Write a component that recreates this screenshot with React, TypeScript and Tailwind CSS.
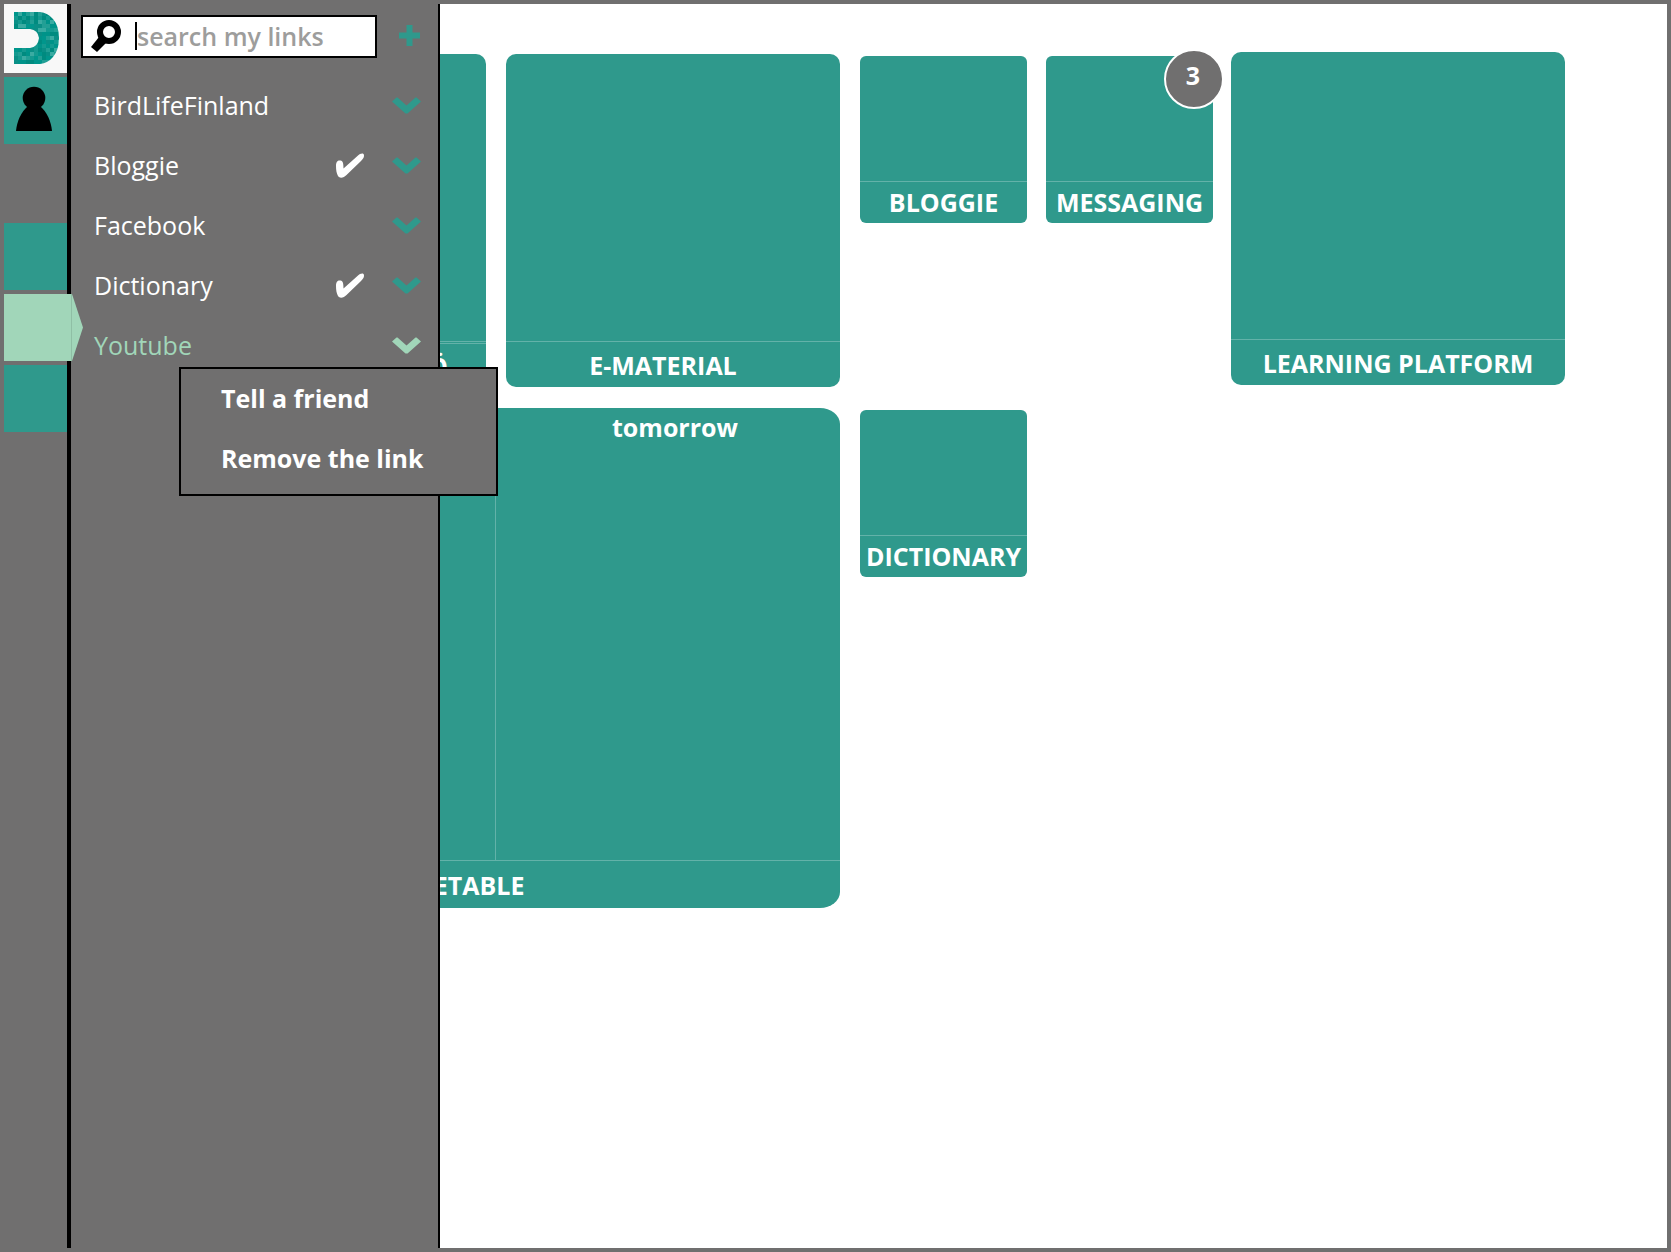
import React from 'react';

const links = [
  { name: 'BirdLifeFinland', pinned: false },
  { name: 'Bloggie', pinned: true },
  { name: 'Facebook', pinned: false },
  { name: 'Dictionary', pinned: true },
  { name: 'Youtube', pinned: false },
];

const SELECTED = 'Youtube';

const mosaic = ['#00968c', '#0a8f86', '#229f95', '#009389', '#149a90', '#008b80', '#3aaba2'];

const Logo = () => {
  const cells = [];
  for (let y = 0; y < 13; y++) {
    for (let x = 0; x < 12; x++) {
      const color = mosaic[(x * 5 + y * 3 + x * y * 2 + ((x * x + y) % 4)) % mosaic.length];
      cells.push(<rect key={`${x}-${y}`} x={x * 4} y={y * 4} width="4" height="4" fill={color} />);
    }
  }
  return (
    <svg width="46" height="52" viewBox="0 0 46 52" aria-hidden="true">
      <clipPath id="logo-shape">
        <path d="M0 0H26Q34 1 39 7Q45 14 45 26Q45 38 39 45Q34 51 26 52H0V36H16Q24 35 25 26Q24 18 16 17H0Z" />
      </clipPath>
      <g clipPath="url(#logo-shape)" shapeRendering="crispEdges">{cells}</g>
    </svg>
  );
};

const Person = () => (
  <svg width="36" height="46" viewBox="0 0 36 46" aria-hidden="true">
    <circle cx="18" cy="12" r="11.3" />
    <path d="M12 20H24C31 26 35 35 36 45H0C1 35 5 26 12 20Z" />
  </svg>
);

const Magnifier = () => (
  <svg width="30" height="32" viewBox="0 0 30 32" className="shrink-0" aria-hidden="true">
    <circle cx="18" cy="12" r="9" fill="none" stroke="#000" strokeWidth="6" />
    <path d="M8 17L15 23L6 32L0 27Z" />
  </svg>
);

const Check = () => (
  <svg width="28" height="25" viewBox="0 0 28 25" fill="#fff" aria-label="On desktop" role="img">
    <path d="M0 13C0 9 1.500 7.500 3.500 7.500C6.500 7.500 7.500 9 7.500 15.500L22 2.500C24 0.500 28 -0.500 28 2.500C28 4.500 27.500 5.500 25 8L10.500 22C8 24.500 4 26 2 23C0.500 20 0 17 0 13Z" />
  </svg>
);

const Chevron = () => (
  <svg width="29" height="17" viewBox="0 0 29 17" fill="currentColor" aria-hidden="true">
    <path d="M0 4.500L4.500 0.500H5.500L14.500 8.500L23.500 0.500H24.500L29 4.500L15.500 16.500H13.500Z" />
  </svg>
);

const SmallTile = ({ title, badge }: { title: string; badge?: number }) => (
  <a href="#" className="relative flex h-[167px] w-[167px] shrink-0 flex-col rounded-md bg-[#2f998c]">
    <span className="flex-1" />
    <span className="flex h-[42px] items-center justify-center border-t border-white/25 pb-px">{title}</span>
    {badge && (
      <span className="absolute -top-[7px] -right-[11px] flex h-[60px] w-[60px] justify-center rounded-full border-2 border-white bg-[#706f6f] pt-[7px] pr-[2px]">
        {badge}
      </span>
    )}
  </a>
);

const App = () => {
  return (
    <div className="flex min-h-screen border-4 border-[#706f6f] bg-white font-['Open_Sans',sans-serif] text-[25px] leading-[34px] text-white">
      {/* Icon rail */}
      <nav className="relative z-20 flex w-[67px] shrink-0 flex-col gap-1 border-r-4 border-black bg-[#706f6f]">
        <a href="#" aria-label="Home" className="flex h-[69px] bg-[#f8f8f8] pt-2 pl-[10px]">
          <Logo />
        </a>
        <a href="#" aria-label="Profile" className="mb-[75px] flex h-[67px] bg-[#2f998c] pt-[9px] pl-3 text-black">
          <Person />
        </a>
        <a href="#" aria-label="Desktop" className="h-[67px] bg-[#2f998c]" />
        <a href="#" aria-label="My links" className="h-[67px]">
          <svg width="79" height="67" viewBox="0 0 79 67" fill="#a1d6b9" className="max-w-none" aria-hidden="true">
            <path d="M0 0H68L79 33.500L68 67H0Z" />
            <path d="M67.500 0V67" stroke="#8fbfa5" />
          </svg>
        </a>
        <a href="#" aria-label="Settings" className="h-[67px] bg-[#2f998c]" />
      </nav>

      <div className="relative flex-1 overflow-hidden">
        {/* Links drawer */}
        <aside className="absolute inset-y-0 left-0 z-10 w-[369px] border-r-2 border-black bg-[#706f6f] pt-[11px]">
          <div className="flex items-center justify-between pr-[18px] pl-[10px]">
            <label className="flex h-[43px] w-[296px] items-center border-2 border-black bg-white pb-[2px] pl-2">
              <Magnifier />
              <span className="ml-[14px] h-[28px] w-[2px] bg-black" />
              <input
                type="text"
                aria-label="Search my links"
                placeholder="search my links"
                className="h-[34px] w-[220px] font-semibold text-black outline-none placeholder:text-[#9d9d9c]"
              />
            </label>
            <button aria-label="Add link" className="pb-[2px] text-[#2f998c]">
              <svg width="21" height="21" viewBox="0 0 21 21" fill="currentColor" aria-hidden="true">
                <path d="M7.500 0H13.500V7.500H21V13.500H13.500V21H7.500V13.500H0V7.500H7.500Z" />
              </svg>
            </button>
          </div>
          <ul className="mt-[17px]">
            {links.map((link) => (
              <li
                key={link.name}
                className={`flex h-[60px] items-center gap-7 pr-[17px] pl-[23px] ${link.name === SELECTED ? 'text-[#a1d6b9]' : ''}`}
              >
                <a href="#" className="flex-1">{link.name}</a>
                {link.pinned && <Check />}
                <button aria-label={`Options for ${link.name}`} className={link.name === SELECTED ? '' : 'text-[#2f998c]'}>
                  <Chevron />
                </button>
              </li>
            ))}
          </ul>
        </aside>

        {/* Link options menu */}
        <div className="absolute top-[363px] left-[108px] z-30 flex h-[129px] w-[319px] flex-col border-2 border-black bg-[#706f6f] pl-10 font-bold">
          <button className="h-[60px] pb-[2px] text-left">Tell a friend</button>
          <button className="h-[60px] pb-[2px] text-left">Remove the link</button>
        </div>

        {/* Desktop tiles */}
        <main className="flex items-start pt-12 pl-[81px] font-bold">
          <div className="mr-5 flex shrink-0 flex-col gap-[21px] pt-[2px]">
            <div className="flex gap-5">
              <a href="#" className="flex h-[333px] w-[334px] flex-col rounded-[10px] bg-[#2f998c]">
                <span className="flex-1 border-b border-white/25" />
                <span className="mt-px flex h-[44px] items-center justify-end border-t border-white/25 pr-[38px]">Ö</span>
              </a>
              <a href="#" className="flex h-[333px] w-[334px] flex-col rounded-[10px] bg-[#2f998c]">
                <span className="flex-1" />
                <span className="flex h-[46px] items-center justify-center border-t border-white/25 pr-5">E-MATERIAL</span>
              </a>
            </div>
            <a href="#" className="flex h-[500px] flex-col rounded-[20px/16px] bg-[#2f998c]">
              <span className="grid flex-1 grid-cols-2 text-center">
                <span className="border-r border-white/25" />
                <span className="pt-[2px] pl-[14px]">tomorrow</span>
              </span>
              <span className="flex h-[48px] items-center justify-center border-t border-white/25 pt-px pr-20">TIMETABLE</span>
            </a>
          </div>

          <div className="mr-[18px] flex shrink-0 flex-col gap-[187px] pt-1">
            <div className="flex gap-[19px]">
              <SmallTile title="BLOGGIE" />
              <SmallTile title="MESSAGING" badge={3} />
            </div>
            <SmallTile title="DICTIONARY" />
          </div>

          <a href="#" className="flex h-[333px] w-[334px] shrink-0 flex-col rounded-[10px] bg-[#2f998c]">
            <span className="flex-1" />
            <span className="flex h-[46px] items-center justify-center border-t border-white/25">LEARNING PLATFORM</span>
          </a>
        </main>
      </div>
    </div>
  );
};

export default App;
